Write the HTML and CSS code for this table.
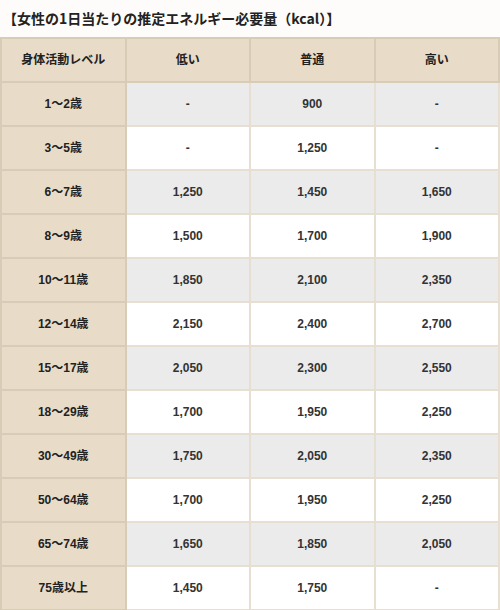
FILE: index.html
```
<!DOCTYPE html>
<html lang="ja">
<head>
<meta charset="utf-8">
<link rel="stylesheet" href="styles.css">
</head>
<body>
<p class="title">【女性の1日当たりの推定エネルギー必要量（kcal）】</p>
<table class="energy">
<thead>
<tr><th>身体活動レベル</th><th>低い</th><th>普通</th><th>高い</th></tr>
</thead>
<tbody>
<tr class="odd"><th>1～2歳</th><td>-</td><td>900</td><td>-</td></tr>
<tr><th>3～5歳</th><td>-</td><td>1,250</td><td>-</td></tr>
<tr class="odd"><th>6～7歳</th><td>1,250</td><td>1,450</td><td>1,650</td></tr>
<tr><th>8～9歳</th><td>1,500</td><td>1,700</td><td>1,900</td></tr>
<tr class="odd"><th>10～11歳</th><td>1,850</td><td>2,100</td><td>2,350</td></tr>
<tr><th>12～14歳</th><td>2,150</td><td>2,400</td><td>2,700</td></tr>
<tr class="odd"><th>15～17歳</th><td>2,050</td><td>2,300</td><td>2,550</td></tr>
<tr><th>18～29歳</th><td>1,700</td><td>1,950</td><td>2,250</td></tr>
<tr class="odd"><th>30～49歳</th><td>1,750</td><td>2,050</td><td>2,350</td></tr>
<tr><th>50～64歳</th><td>1,700</td><td>1,950</td><td>2,250</td></tr>
<tr class="odd"><th>65～74歳</th><td>1,650</td><td>1,850</td><td>2,050</td></tr>
<tr><th>75歳以上</th><td>1,450</td><td>1,750</td><td>-</td></tr>
</tbody>
</table>
</body>
</html>
```
FILE: styles.css
```
html, body {
  margin: 0;
  padding: 0;
  background: #ffffff;
}
body {
  font-family: "Liberation Sans", "Noto Sans CJK JP", sans-serif;
  color: #333333;
}
.title {
  margin: 0;
  padding: 8px 0 0 3px;
  height: 37px;
  box-sizing: border-box;
  font-family: "Noto Sans CJK JP", sans-serif;
  font-size: 14px;
  font-weight: bold;
  line-height: 20px;
  color: #222222;
  background: #fdfcfa;
}
.energy {
  width: 500px;
  table-layout: fixed;
  border-collapse: collapse;
  font-size: 12px;
}
.energy th,
.energy td {
  border: 2px solid #e7dfd2;
  text-align: center;
  vertical-align: middle;
  padding: 0;
  height: 42px;
  line-height: 16px;
  font-weight: bold;
}
.energy td {
  background: #ffffff;
  color: #333333;
}
.energy th {
  background: #e8dcc8;
  border-color: #d9ccb6;
  color: #222222;
}
.energy tr.odd td {
  background: #ebebeb;
}
```
